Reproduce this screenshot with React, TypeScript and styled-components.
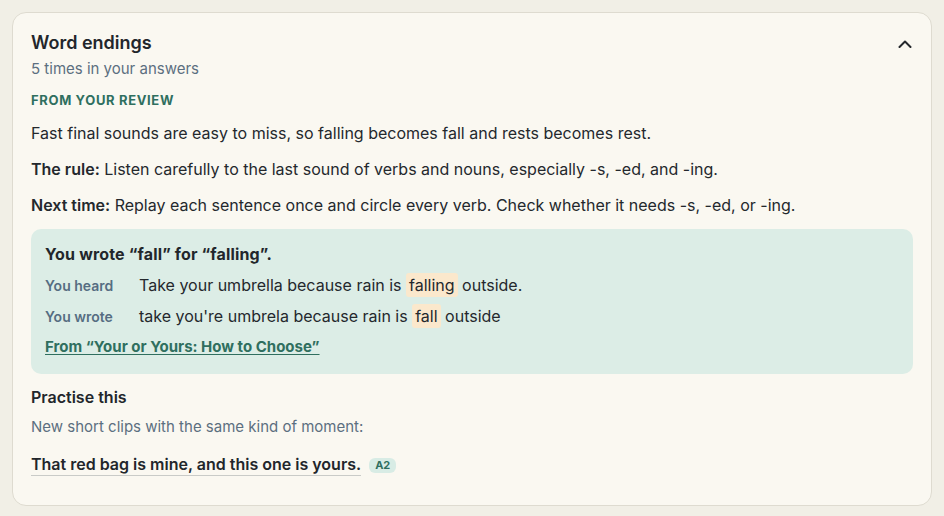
import React from 'react';
import styled, { createGlobalStyle } from 'styled-components';

const GlobalStyle = createGlobalStyle`
  html, body {
    margin: 0;
    padding: 0;
    background: #f1efe6;
  }
  body {
    padding: 12px;
    font-family: Inter, "Noto Sans", sans-serif;
    color: #24282d;
  }
`;

const heard = {
  before: 'Take your umbrella because rain is',
  word: 'falling',
  after: 'outside.',
};

const wrote = {
  before: "take you're umbrela because rain is",
  word: 'fall',
  after: 'outside',
};

function App() {
  return (
    <>
      <GlobalStyle />
      <Card>
        <Header>
          <div>
            <Title>Word endings</Title>
            <Subtitle>5 times in your answers</Subtitle>
          </div>
          <Toggle aria-label="Collapse">
            <svg width="14" height="8" viewBox="0 0 14 8" fill="none" stroke="#24282d" strokeWidth="2" strokeLinecap="round" strokeLinejoin="round">
              <path d="M1.5 7L7 1.5 12.5 7" />
            </svg>
          </Toggle>
        </Header>

        <Eyebrow>From your review</Eyebrow>
        <Para first>Fast final sounds are easy to miss, so falling becomes fall and rests becomes rest.</Para>
        <Para>
          <strong>The rule:</strong> Listen carefully to the last sound of verbs and nouns, especially -s, -ed, and -ing.
        </Para>
        <Para>
          <strong>Next time:</strong> Replay each sentence once and circle every verb. Check whether it needs -s, -ed, or -ing.
        </Para>

        <Callout>
          <CalloutTitle>You wrote “fall” for “falling”.</CalloutTitle>
          <CompareRow>
            <RowLabel>You heard</RowLabel>
            <RowText>
              {heard.before} <Mark>{heard.word}</Mark> {heard.after}
            </RowText>
          </CompareRow>
          <CompareRow>
            <RowLabel>You wrote</RowLabel>
            <RowText>
              {wrote.before} <Mark>{wrote.word}</Mark> {wrote.after}
            </RowText>
          </CompareRow>
          <SourceLink href="#">From “Your or Yours: How to Choose”</SourceLink>
        </Callout>

        <SectionTitle>Practise this</SectionTitle>
        <SectionHint>New short clips with the same kind of moment:</SectionHint>
        <ClipRow>
          <ClipLink href="#">That red bag is mine, and this one is yours.</ClipLink>
          <Level>A2</Level>
        </ClipRow>
      </Card>
    </>
  );
}

export default App;

const Card = styled.section`
  box-sizing: border-box;
  background: #faf8f1;
  border: 1px solid #dedbd0;
  border-radius: 14px;
  padding: 18px 18px 29px;
  display: flex;
  flex-direction: column;
`;

const Header = styled.div`
  display: flex;
  justify-content: space-between;
  align-items: flex-start;
`;

const Title = styled.h2`
  margin: 0;
  font-size: 18px;
  line-height: 24px;
  font-weight: 600;
  color: #22262b;
`;

const Subtitle = styled.div`
  margin-top: 4px;
  font-size: 15px;
  line-height: 20px;
  color: #5c6f80;
`;

const Toggle = styled.button`
  border: none;
  background: transparent;
  padding: 0;
  margin: 9px 1px 0 0;
  width: 14px;
  height: 8px;
  display: flex;
  cursor: pointer;
`;

const Eyebrow = styled.div`
  margin-top: 13px;
  font-size: 13px;
  line-height: 16px;
  font-weight: 700;
  letter-spacing: 0.05em;
  text-transform: uppercase;
  color: #2f6f5f;
`;

const Para = styled.p<{ first?: boolean }>`
  margin: ${(p) => (p.first ? '13px' : '12px')} 0 0;
  font-size: 16px;
  line-height: 24px;
  color: #24282d;

  strong {
    font-weight: 600;
  }
`;

const Callout = styled.div`
  margin-top: 12px;
  background: #dcede6;
  border-radius: 10px;
  padding: 14px 14px 17px;
  display: flex;
  flex-direction: column;
`;

const CalloutTitle = styled.div`
  font-size: 16px;
  line-height: 22px;
  font-weight: 700;
  letter-spacing: 0.01em;
  color: #22262b;
`;

const CompareRow = styled.div`
  margin-top: 8px;
  display: flex;
  align-items: baseline;

  & + & {
    margin-top: 7px;
  }
`;

const RowLabel = styled.span`
  width: 94px;
  flex-shrink: 0;
  font-size: 14px;
  font-weight: 600;
  color: #566d82;
`;

const RowText = styled.span`
  font-size: 16px;
  line-height: 24px;
  color: #24282d;
`;

const Mark = styled.span`
  background: #fbe8cc;
  border-radius: 3px;
  padding: 2px 3px;
`;

const SourceLink = styled.a`
  margin-top: 9px;
  align-self: flex-start;
  font-size: 15px;
  line-height: 20px;
  font-weight: 700;
  color: #2f6f5f;
  text-decoration: underline;
  text-underline-offset: 2px;
`;

const SectionTitle = styled.h3`
  margin: 12px 0 0;
  font-size: 16px;
  line-height: 22px;
  font-weight: 600;
  color: #22262b;
`;

const SectionHint = styled.div`
  margin-top: 9px;
  font-size: 15px;
  line-height: 20px;
  color: #5c6f80;
`;

const ClipRow = styled.div`
  margin-top: 17px;
  display: flex;
  align-items: center;
  gap: 8px;
`;

const ClipLink = styled.a`
  font-size: 16px;
  line-height: 21px;
  font-weight: 600;
  color: #22262b;
  text-decoration: none;
  border-bottom: 1px solid #c9cbc8;
`;

const Level = styled.span`
  background: #d8ece5;
  color: #2f6f5f;
  font-size: 11px;
  line-height: 15px;
  font-weight: 700;
  padding: 0 6px;
  border-radius: 6px;
`;
